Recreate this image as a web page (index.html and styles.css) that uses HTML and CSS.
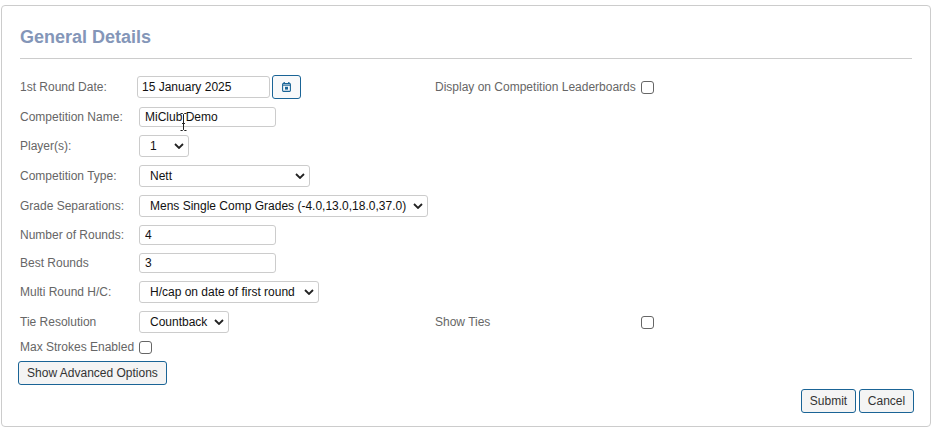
FILE: index.html
```html
<!DOCTYPE html>
<html lang="en">
<head>
  <meta charset="UTF-8" />
  <title>General Details</title>
  <link rel="stylesheet" href="styles.css">
</head>
<body>
  <div class="panel">
    <h2 class="panel-title">General Details</h2>

    <form class="details-form">
      <div class="row">
        <div class="col-left">
          <label class="field-label">1st Round Date:</label>
          <input class="text-input date-input" type="text" value="15 January 2025">
          <button class="btn date-btn" type="button" aria-label="Pick date">
            <svg width="9" height="10" viewBox="0 0 9 10">
              <path d="M2.2 0v2M6.8 0v2" stroke="#1a6496" stroke-width="1.3" fill="none"/>
              <rect x="0.6" y="1.6" width="7.8" height="7.8" rx="0.8" stroke="#1a6496" stroke-width="1.1" fill="none"/>
              <path d="M0.6 3.2h7.8" stroke="#1a6496" stroke-width="1"/>
              <rect x="3" y="4.8" width="3" height="2.8" fill="#1a6496"/>
            </svg>
          </button>
        </div>
        <label class="field-label side-label wide">Display on Competition Leaderboards</label>
        <input class="check" type="checkbox">
      </div>

      <div class="row">
        <div class="col-left">
          <label class="field-label">Competition Name:</label>
          <div class="cursor-wrap">
            <input class="text-input" type="text" value="MiClub Demo">
            <svg class="text-cursor" width="7" height="18" viewBox="0 0 7 18">
              <path d="M0.5 0.5h2l1 1 1-1h2M3.5 1.5v15M0.5 17.5h2l1-1 1 1h2M2 10.5h3" stroke="#222" stroke-width="1" fill="none"/>
            </svg>
          </div>
        </div>
      </div>

      <div class="row">
        <div class="col-left">
          <label class="field-label">Player(s):</label>
          <select class="select player-select"><option>1</option></select>
        </div>
      </div>

      <div class="row">
        <div class="col-left">
          <label class="field-label">Competition Type:</label>
          <select class="select type-select"><option>Nett</option></select>
        </div>
      </div>

      <div class="row">
        <div class="col-left">
          <label class="field-label">Grade Separations:</label>
          <select class="select grade-select"><option>Mens Single Comp Grades (-4.0,13.0,18.0,37.0)</option></select>
        </div>
      </div>

      <div class="row">
        <div class="col-left">
          <label class="field-label">Number of Rounds:</label>
          <input class="text-input" type="text" value="4">
        </div>
      </div>

      <div class="row">
        <div class="col-left">
          <label class="field-label">Best Rounds</label>
          <input class="text-input" type="text" value="3">
        </div>
      </div>

      <div class="row">
        <div class="col-left">
          <label class="field-label">Multi Round H/C:</label>
          <select class="select multi-select"><option>H/cap on date of first round</option></select>
        </div>
      </div>

      <div class="row">
        <div class="col-left">
          <label class="field-label">Tie Resolution</label>
          <select class="select tie-select"><option>Countback</option></select>
        </div>
        <label class="field-label side-label wide">Show Ties</label>
        <input class="check" type="checkbox">
      </div>

      <div class="row row-strokes">
        <label class="field-label auto">Max Strokes Enabled</label>
        <input class="check" type="checkbox">
      </div>

      <div class="row-advanced">
        <button class="btn advanced-btn" type="button">Show Advanced Options</button>
      </div>

      <div class="form-actions">
        <button class="btn action-btn" type="submit">Submit</button>
        <button class="btn action-btn" type="button">Cancel</button>
      </div>
    </form>
  </div>
</body>
</html>
```

FILE: styles.css
```css
:root {
  --title-color: #8496b8;
  --label-color: #666666;
  --border-color: #cccccc;
  --btn-border: #1a6496;
  --btn-bg: #f4f4f4;
  --text-color: #222222;
}
body {
  font-family: "Liberation Sans", Arial, sans-serif;
  font-size: 12px;
  margin: 0;
  background-color: #ffffff;
  color: var(--text-color);
}
.panel {
  box-sizing: border-box;
  width: 930px;
  height: 422px;
  margin: 5px 0 0 1px;
  padding: 20px 18px 0 18px;
  background-color: #ffffff;
  border: 1px solid var(--border-color);
  border-radius: 4px;
}
.panel-title {
  margin: 0 0 16px 0;
  padding: 0 0 9px 0;
  font-size: 18px;
  line-height: 23px;
  font-weight: bold;
  color: var(--title-color);
  border-bottom: 1px solid var(--border-color);
}
.details-form {
  display: flex;
  flex-direction: column;
  gap: 8px;
}
.row {
  display: flex;
  align-items: center;
}
.col-left {
  display: flex;
  align-items: center;
  width: 415px;
}
.field-label {
  flex: none;
  width: 119px;
  color: var(--label-color);
  line-height: 14px;
}
.field-label.auto {
  width: auto;
}
.side-label.wide {
  width: 206px;
}
.text-input {
  box-sizing: border-box;
  width: 137px;
  height: 20px;
  padding: 0 5px;
  font: inherit;
  color: #111111;
  background-color: #ffffff;
  border: 1px solid var(--border-color);
  border-radius: 3px;
}
.date-input {
  width: 133px;
  height: 22px;
  margin-left: -2px;
  padding-left: 4px;
}
.cursor-wrap {
  position: relative;
  display: flex;
}
.text-cursor {
  position: absolute;
  left: 41px;
  top: 6px;
}
.select {
  box-sizing: border-box;
  height: 22px;
  padding: 0 0 0 10px;
  font: inherit;
  color: #111111;
  border: 1px solid var(--border-color);
  border-radius: 3px;
  appearance: none;
  background-color: #ffffff;
  background-image: url("data:image/svg+xml,%3Csvg xmlns='http://www.w3.org/2000/svg' width='10' height='6'%3E%3Cpath d='M1 1l4 4 4-4' stroke='%23222' stroke-width='1.8' fill='none'/%3E%3C/svg%3E");
  background-repeat: no-repeat;
  background-position: right 4px center;
}
.player-select { width: 50px; }
.type-select { width: 171px; }
.grade-select { width: 289px; }
.multi-select { width: 180px; }
.tie-select { width: 90px; }
.check {
  box-sizing: border-box;
  width: 13px;
  height: 13px;
  margin: 0;
  appearance: none;
  background-color: #ffffff;
  border: 1px solid #666666;
  border-radius: 3px;
}
.row-strokes {
  margin-top: -1px;
  gap: 5px;
}
.row-strokes .check {
  margin-top: 1px;
}
.row-advanced {
  margin: -1px 0 0 -2px;
}
.btn {
  box-sizing: border-box;
  font: inherit;
  color: #333333;
  background-color: var(--btn-bg);
  border: 1px solid var(--btn-border);
  border-radius: 3px;
  cursor: pointer;
}
.date-btn {
  display: flex;
  align-items: center;
  justify-content: center;
  width: 29px;
  height: 24px;
  margin-left: 2px;
  padding: 0;
  background-color: #f8f9fa;
}
.advanced-btn {
  width: 149px;
  height: 24px;
  padding: 0;
}
.form-actions {
  display: flex;
  justify-content: flex-end;
  gap: 3px;
  margin-top: -4px;
  margin-right: -2px;
}
.action-btn {
  width: 55px;
  height: 24px;
  padding: 0;
}
```
